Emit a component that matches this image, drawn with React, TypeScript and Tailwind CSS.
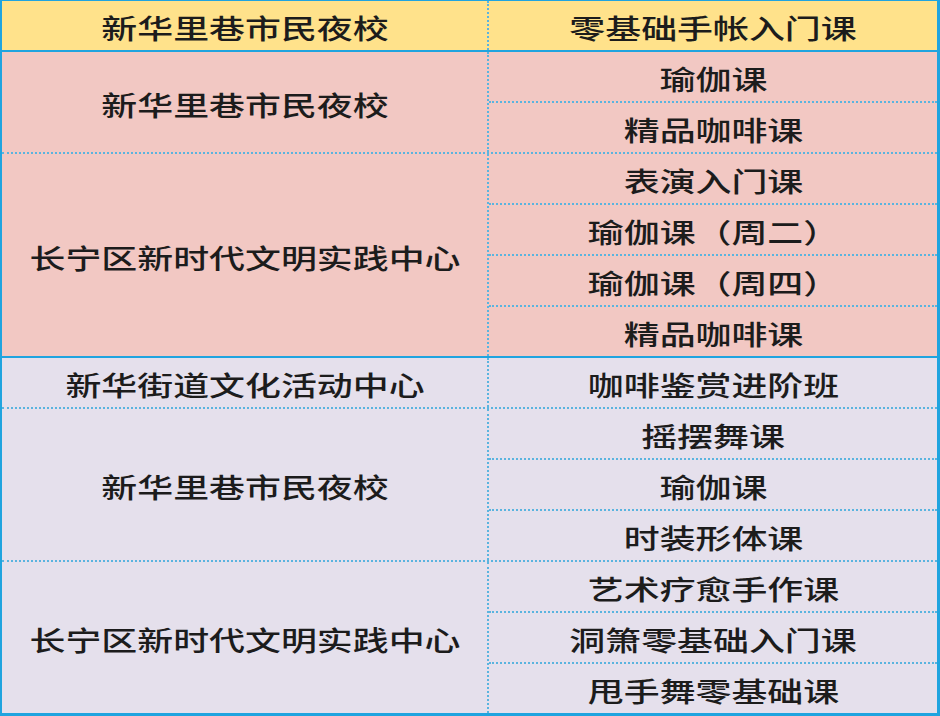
const groups = [
  { tone: "pink", name: "新华里巷市民夜校", courses: ["瑜伽课", "精品咖啡课"] },
  {
    tone: "pink",
    name: "长宁区新时代文明实践中心",
    courses: ["表演入门课", "瑜伽课（周二）", "瑜伽课（周四）", "精品咖啡课"],
  },
  { tone: "lav", name: "新华街道文化活动中心", courses: ["咖啡鉴赏进阶班"] },
  { tone: "lav", name: "新华里巷市民夜校", courses: ["摇摆舞课", "瑜伽课", "时装形体课"] },
  {
    tone: "lav",
    name: "长宁区新时代文明实践中心",
    courses: ["艺术疗愈手作课", "洞箫零基础入门课", "甩手舞零基础课"],
  },
];

// glyphs in the shot are stretched sideways, so scale the text on x
const textCls =
  "inline-block whitespace-nowrap scale-x-[1.33] translate-y-[2px] text-[27px] leading-none text-[#1c1c1c] font-medium [font-family:'Noto_Sans_CJK_SC','Noto_Sans',sans-serif]";

function App() {
  return (
    <div className="w-[940px] h-[716px] overflow-hidden border-t border-l-2 border-r-[3px] border-b-[3px] border-[#20a4df] flex flex-col">
      <div className="flex h-[51px] bg-[#ffe28b] border-b-2 border-[#20a4df] shrink-0">
        <div className="w-[487px] shrink-0 flex items-center justify-center border-r-2 border-dotted border-[#5ab4df]">
          <span className={textCls}>新华里巷市民夜校</span>
        </div>
        <div className="flex-1 flex items-center justify-center">
          <span className={textCls}>零基础手帐入门课</span>
        </div>
      </div>
      {groups.map((g, gi) => {
        const isLast = gi === groups.length - 1;
        const sectionEnd = gi === 1;
        const bg = g.tone === "pink" ? "bg-[#f2c8c3]" : "bg-[#e5e0ec]";
        let groupBorder = "border-b-2 border-dotted border-[#5ab4df]";
        if (sectionEnd) groupBorder = "border-b-2 border-solid border-[#20a4df]";
        if (isLast) groupBorder = "";
        return (
          <div key={gi} className={`flex shrink-0 ${bg} ${groupBorder}`}>
            <div className="w-[487px] shrink-0 flex items-center justify-center border-r-2 border-dotted border-[#5ab4df]">
              <span className={textCls}>{g.name}</span>
            </div>
            <div className="flex-1 flex flex-col">
              {g.courses.map((c, ci) => (
                <div
                  key={ci}
                  className={
                    ci < g.courses.length - 1
                      ? "h-[51px] flex items-center justify-center border-b-2 border-dotted border-[#5ab4df]"
                      : "h-[49px] flex items-center justify-center"
                  }
                >
                  <span className={textCls}>{c}</span>
                </div>
              ))}
            </div>
          </div>
        );
      })}
    </div>
  );
}

export default App;
